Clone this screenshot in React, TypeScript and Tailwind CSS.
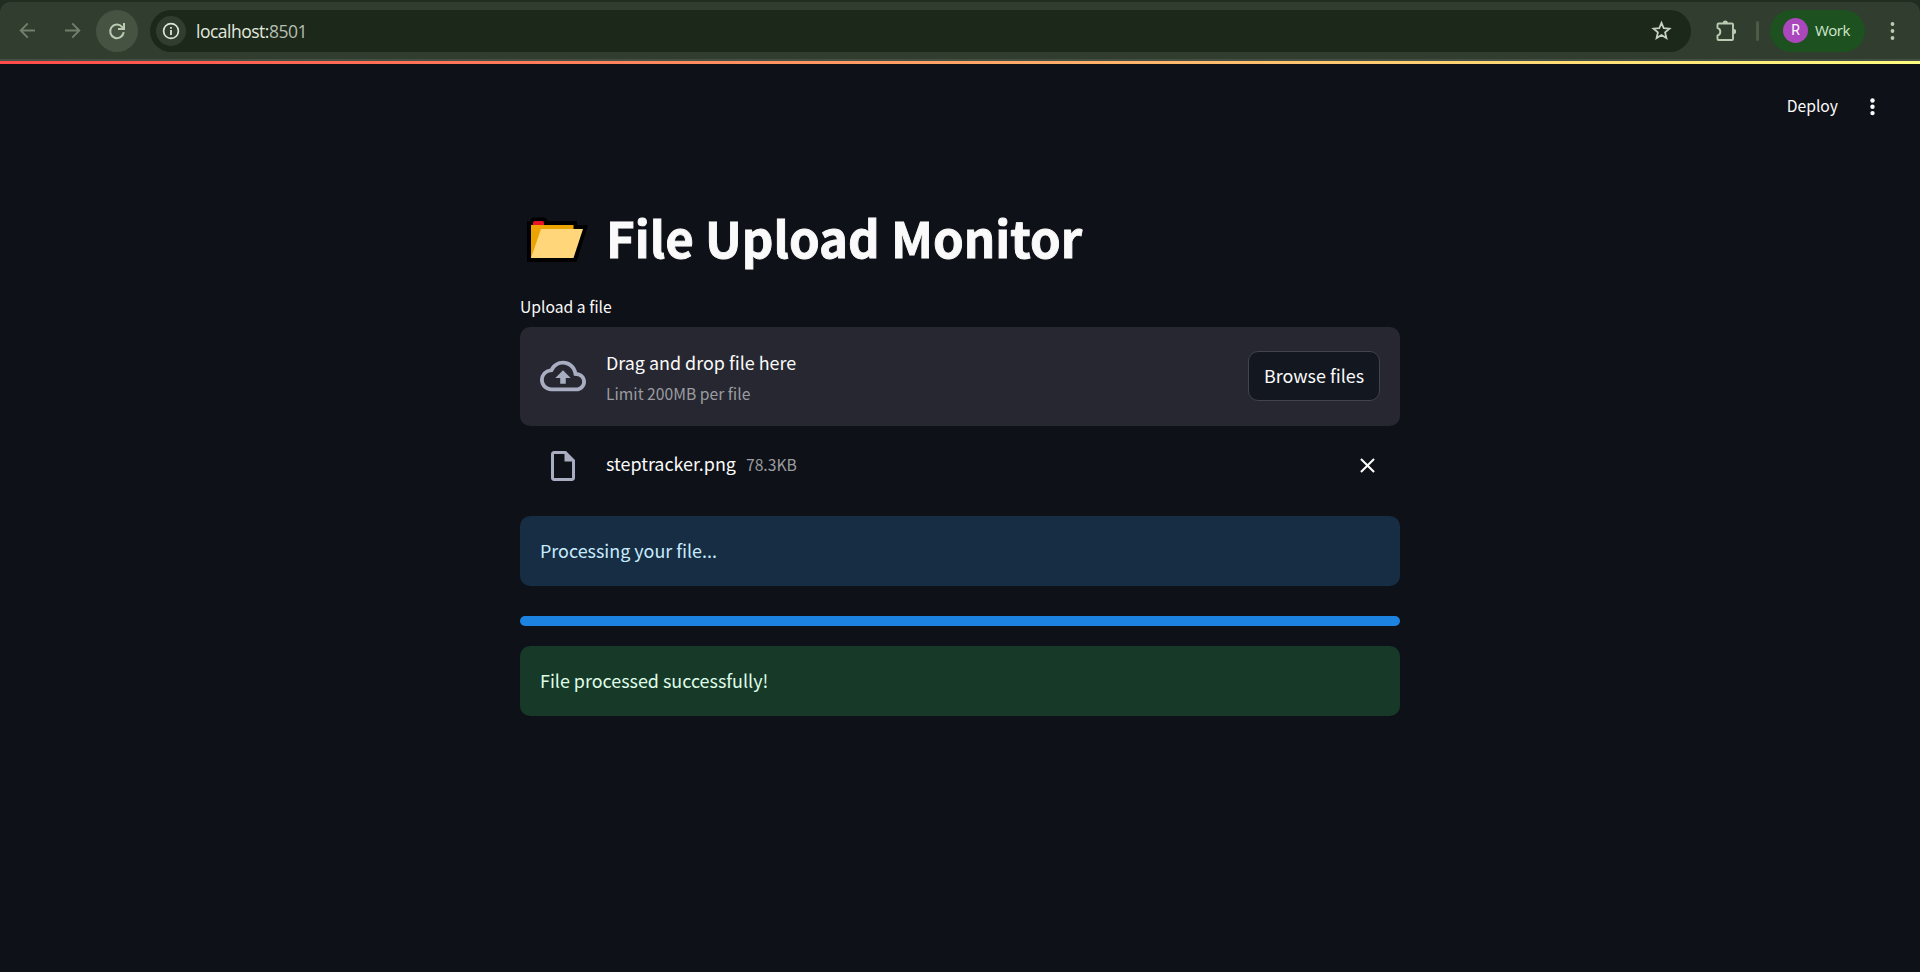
import { MdClose, MdOutlineCloudUpload, MdOutlineInsertDriveFile } from "react-icons/md";

function BrowserBar() {
  return (
    <div className="bg-[#222d21]">
      <div className="flex h-[59px] items-stretch pt-[2px]">
        <div className="flex flex-1 items-center rounded-t-[10px] bg-[#313d2e] pr-[20px] pl-[17px]">
          <svg className="size-[21px]" viewBox="0 0 21 21" fill="none" stroke="#717f6d" strokeWidth="1.9">
            <path d="M18 10.5H4M10.8 3.4 3.7 10.5l7.1 7.1" />
          </svg>
          <svg className="ml-[24px] size-[21px]" viewBox="0 0 21 21" fill="none" stroke="#717f6d" strokeWidth="1.9">
            <path d="M3 10.5h14M10.2 3.4l7.1 7.1-7.1 7.1" />
          </svg>
          <div className="ml-[13px] flex size-[42px] items-center justify-center rounded-full bg-[#465343]">
            <svg className="size-[20px]" viewBox="0 0 20 20" fill="none" stroke="#b9ccb2" strokeWidth="2">
              <path d="M16.7 11.2a6.8 6.8 0 1 1-1.7-5.4l1.5 1.7" />
              <path d="M17 2v5.9h-6" />
            </svg>
          </div>
          <div className="ml-[12px] flex h-[42px] flex-1 items-center rounded-full bg-[#1c281a] pr-[19px] pl-[6px]">
            <div className="flex size-[30px] items-center justify-center rounded-full bg-[#313d2e]">
              <svg className="size-[18px]" viewBox="0 0 18 18" fill="none">
                <circle cx="9" cy="9" r="7.4" stroke="#dde5d8" strokeWidth="1.7" />
                <path d="M9 8v5M9 5v1.8" stroke="#dde5d8" strokeWidth="1.8" />
              </svg>
            </div>
            <span className="ml-[10px] flex-1 pt-[1px] font-['Open_Sans','Noto_Sans',sans-serif] text-[17.5px] leading-[24px] tracking-[-0.5px] text-[#e2e8df]">
              localhost:<span className="text-[#b5beb1]">8501</span>
            </span>
            <svg className="size-[21px]" viewBox="0 0 21 21" fill="none" stroke="#c6cfc1" strokeWidth="1.8">
              <path d="m10.5 2.8 2.2 5.3 5.8.5-4.4 3.8 1.3 5.6-4.9-3-4.9 3 1.3-5.6-4.4-3.8 5.8-.5z" />
            </svg>
          </div>
          <svg className="ml-[23px] size-[22px]" viewBox="0 0 22 22" fill="none">
            <path
              d="M4.500 3.500h13.500q1 0 1 1v14.500q0 1-1 1H4.500q-1 0-1-1v-3.400c3.800-1.400 3.800-6.300 0-7.700V4.500q0-1 1-1z"
              stroke="#b9ccb2"
              strokeWidth="1.900"
            />
            <path d="M8.700 3a2.600 2.600 0 0 1 5.200 0zM19.500 8.900a2.700 2.700 0 0 1 0 5.400z" fill="#b9ccb2" />
          </svg>
          <div className="ml-[20px] h-[20px] w-[3px] rounded-full bg-[#4b5b46]" />
          <div className="ml-[11px] flex h-[42px] w-[95px] items-center rounded-full bg-[#1d5120] pl-[13px]">
            <div className="flex size-[25px] items-center justify-center rounded-full bg-[#ab47bc] font-[Roboto,sans-serif] text-[14px] text-white">
              R
            </div>
            <span className="ml-[7px] pb-[2px] font-['Open_Sans','Noto_Sans',sans-serif] text-[15px] leading-[20px] tracking-[-0.5px] text-[#d3e8cf]">
              Work
            </span>
          </div>
          <svg className="ml-[21px] h-[18px] w-[14px]" viewBox="0 0 14 18" fill="#b9ccb2">
            <circle cx="6.500" cy="2" r="1.900" />
            <circle cx="6.500" cy="9" r="1.900" />
            <circle cx="6.500" cy="16" r="1.900" />
          </svg>
        </div>
      </div>
      <div className="h-[2px] bg-[#454f44]" />
    </div>
  );
}

function AppHeader() {
  return (
    <header className="flex h-[85px] items-center justify-end pr-[43px]">
      <span className="pb-[1px] text-[15.7px] leading-[24px]">Deploy</span>
      <svg className="ml-[30px] h-[18px] w-[9px]" viewBox="0 0 9 18" fill="#fafafa">
        <circle cx="4.500" cy="2.500" r="2.200" />
        <circle cx="4.500" cy="8.800" r="2.200" />
        <circle cx="4.500" cy="15.100" r="2.200" />
      </svg>
    </header>
  );
}

function FolderIcon() {
  return (
    <svg className="h-[46px] w-[62px] shrink-0" viewBox="0 0 62 46">
      <path d="M0 4h3q1-3.500 4-3.500h9q4 0 4.500 3.500H50v4h11L49.500 45H0z" fill="#000" />
      <path d="M6 9V5.500Q6 4 8 4h7.500Q17 4 17 5.500V9z" fill="#e81224" />
      <path d="M4 8h42.500v5L38 41H4z" fill="#eca403" />
      <path d="M14 12h42l-9.500 29H4z" fill="#ffd679" />
    </svg>
  );
}

function Uploader() {
  return (
    <section>
      <div className="text-[15.7px] leading-[28px]">Upload a file</div>
      <div className="mt-[6px] flex h-[99px] items-center rounded-[10px] bg-[#262730] px-[20px] pb-[1px]">
        <MdOutlineCloudUpload className="size-[46px] text-[#a9adc1]" />
        <div className="ml-[20px] flex flex-1 flex-col pt-[3px]">
          <span className="text-[17.92px] leading-[32px]">Drag and drop file here</span>
          <span className="text-[15.7px] leading-[31px] text-[#9b9ca1]">Limit 200MB per file</span>
        </div>
        <button className="flex h-[50px] w-[132px] items-center justify-center rounded-[10px] border border-[#41444c] bg-[#131720] pb-[2px] text-[17.92px]">
          Browse files
        </button>
      </div>
      <div className="flex h-[80px] items-center pr-[20px] pl-[25px]">
        <MdOutlineInsertDriveFile className="size-[36px] text-[#a9adc1]" />
        <span className="ml-[25px] pb-[5px] text-[17.92px]">steptracker.png</span>
        <span className="ml-[10px] flex-1 pb-[2px] text-[15.7px] text-[#9b9ca1]">78.3KB</span>
        <MdClose className="mb-[2px] size-[25px] text-[#fafafa]" />
      </div>
    </section>
  );
}

export default function App() {
  return (
    <div className="h-[972px] overflow-hidden bg-[#0e1117] font-['Noto_Sans_CJK_JP',sans-serif] text-[#fafafa]">
      <BrowserBar />
      <div className="h-[3px] bg-[linear-gradient(90deg,#ff4b4b,#fffd80)]" />
      <AppHeader />
      <main className="mx-auto w-[880px] pt-[58px]">
        <h1 className="flex h-[66px] items-center pl-[7px]">
          <FolderIcon />
          <span className="ml-[17px] pb-[7px] text-[49.2px] leading-[66px] font-bold whitespace-nowrap [-webkit-text-stroke:0.9px_#fafafa]">
            File Upload Monitor
          </span>
        </h1>
        <div className="mt-[20px]">
          <Uploader />
        </div>
        <div className="mt-[10px] flex h-[70px] items-center rounded-[10px] bg-[#172d43] px-[20px] pb-[2px] text-[17.92px] text-[#c7ebff]">
          Processing your file...
        </div>
        <div className="mt-[30px] h-[10px] rounded-full bg-[#1c83e1]" />
        <div className="mt-[20px] flex h-[70px] items-center rounded-[10px] bg-[#173928] px-[20px] pb-[2px] text-[17.92px] text-[#dffde9]">
          File processed successfully!
        </div>
      </main>
    </div>
  );
}
